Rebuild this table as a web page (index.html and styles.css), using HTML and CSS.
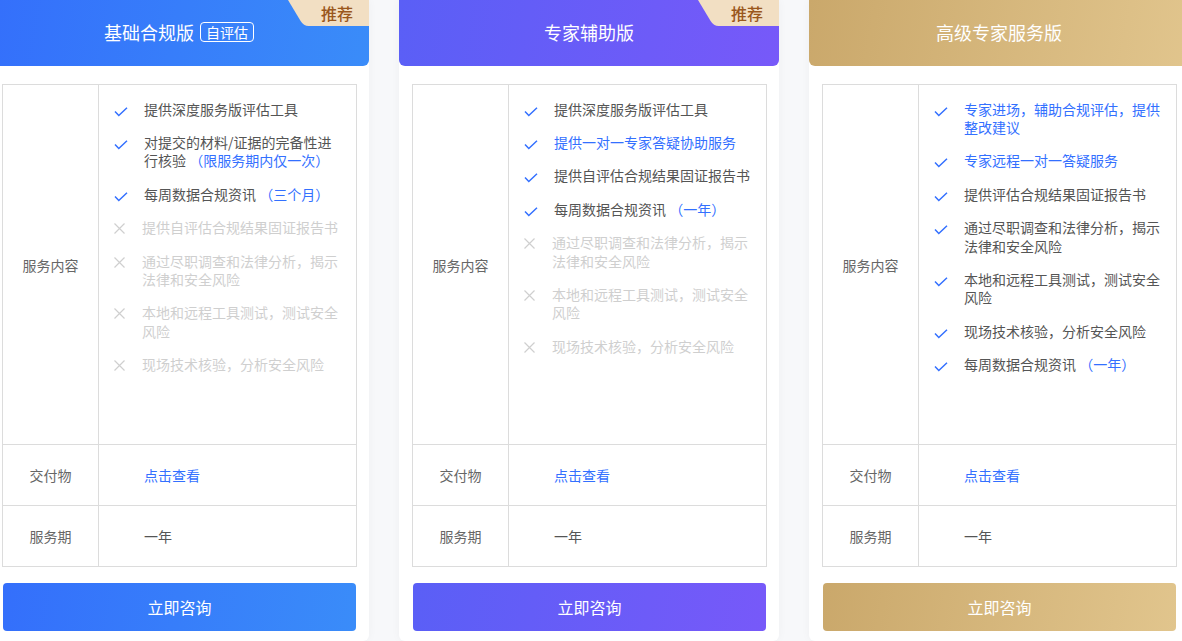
FILE: index.html
```html
<!DOCTYPE html>
<html lang="zh-CN">
<head>
<meta charset="utf-8">
<title>服务版本</title>
<link rel="stylesheet" href="styles.css">
</head>
<body>
<div class="cards">
  <div class="card card--blue">
    <div class="card__head">
      <span class="card__title">基础合规版</span><span class="card__badge">自评估</span>
      <div class="card__tag"><span>推荐</span></div>
    </div>
    <div class="card__body">
      <div class="spec">
        <div class="spec__row spec__row--main">
          <div class="spec__label">服务内容</div>
          <div class="spec__value">
            <ul class="features">
              <li class="feat"><span class="feat__icon"><svg width="14" height="10" viewBox="0 0 14 10"><path d="M1 4.5 L4.8 8.5 L13 0.8" fill="none" stroke="#3370ff" stroke-width="1.5"/></svg></span><span class="feat__text">提供深度服务版评估工具</span></li>
              <li class="feat"><span class="feat__icon"><svg width="14" height="10" viewBox="0 0 14 10"><path d="M1 4.5 L4.8 8.5 L13 0.8" fill="none" stroke="#3370ff" stroke-width="1.5"/></svg></span><span class="feat__text">对提交的材料/证据的完备性进行核验 <em class="hl">（限服务期内仅一次）</em></span></li>
              <li class="feat"><span class="feat__icon"><svg width="14" height="10" viewBox="0 0 14 10"><path d="M1 4.5 L4.8 8.5 L13 0.8" fill="none" stroke="#3370ff" stroke-width="1.5"/></svg></span><span class="feat__text">每周数据合规资讯 <em class="hl">（三个月）</em></span></li>
              <li class="feat feat--off"><span class="feat__icon"><svg width="11" height="11" viewBox="0 0 11 11"><path d="M0.5 0.5 L10.5 10.5 M10.5 0.5 L0.5 10.5" fill="none" stroke="#cfcfcf" stroke-width="1.2"/></svg></span><span class="feat__text">提供自评估合规结果固证报告书</span></li>
              <li class="feat feat--off"><span class="feat__icon"><svg width="11" height="11" viewBox="0 0 11 11"><path d="M0.5 0.5 L10.5 10.5 M10.5 0.5 L0.5 10.5" fill="none" stroke="#cfcfcf" stroke-width="1.2"/></svg></span><span class="feat__text">通过尽职调查和法律分析，揭示法律和安全风险</span></li>
              <li class="feat feat--off"><span class="feat__icon"><svg width="11" height="11" viewBox="0 0 11 11"><path d="M0.5 0.5 L10.5 10.5 M10.5 0.5 L0.5 10.5" fill="none" stroke="#cfcfcf" stroke-width="1.2"/></svg></span><span class="feat__text">本地和远程工具测试，测试安全风险</span></li>
              <li class="feat feat--off"><span class="feat__icon"><svg width="11" height="11" viewBox="0 0 11 11"><path d="M0.5 0.5 L10.5 10.5 M10.5 0.5 L0.5 10.5" fill="none" stroke="#cfcfcf" stroke-width="1.2"/></svg></span><span class="feat__text">现场技术核验，分析安全风险</span></li>
            </ul>
          </div>
        </div>
        <div class="spec__row">
          <div class="spec__label">交付物</div>
          <div class="spec__value spec__value--plain"><a class="link">点击查看</a></div>
        </div>
        <div class="spec__row">
          <div class="spec__label">服务期</div>
          <div class="spec__value spec__value--plain">一年</div>
        </div>
      </div>
      <button class="card__btn">立即咨询</button>
    </div>
  </div>

  <div class="card card--purple">
    <div class="card__head">
      <span class="card__title">专家辅助版</span>
      <div class="card__tag"><span>推荐</span></div>
    </div>
    <div class="card__body">
      <div class="spec">
        <div class="spec__row spec__row--main">
          <div class="spec__label">服务内容</div>
          <div class="spec__value">
            <ul class="features">
              <li class="feat"><span class="feat__icon"><svg width="14" height="10" viewBox="0 0 14 10"><path d="M1 4.5 L4.8 8.5 L13 0.8" fill="none" stroke="#3370ff" stroke-width="1.5"/></svg></span><span class="feat__text">提供深度服务版评估工具</span></li>
              <li class="feat"><span class="feat__icon"><svg width="14" height="10" viewBox="0 0 14 10"><path d="M1 4.5 L4.8 8.5 L13 0.8" fill="none" stroke="#3370ff" stroke-width="1.5"/></svg></span><span class="feat__text hl">提供一对一专家答疑协助服务</span></li>
              <li class="feat"><span class="feat__icon"><svg width="14" height="10" viewBox="0 0 14 10"><path d="M1 4.5 L4.8 8.5 L13 0.8" fill="none" stroke="#3370ff" stroke-width="1.5"/></svg></span><span class="feat__text">提供自评估合规结果固证报告书</span></li>
              <li class="feat"><span class="feat__icon"><svg width="14" height="10" viewBox="0 0 14 10"><path d="M1 4.5 L4.8 8.5 L13 0.8" fill="none" stroke="#3370ff" stroke-width="1.5"/></svg></span><span class="feat__text">每周数据合规资讯 <em class="hl">（一年）</em></span></li>
              <li class="feat feat--off"><span class="feat__icon"><svg width="11" height="11" viewBox="0 0 11 11"><path d="M0.5 0.5 L10.5 10.5 M10.5 0.5 L0.5 10.5" fill="none" stroke="#cfcfcf" stroke-width="1.2"/></svg></span><span class="feat__text">通过尽职调查和法律分析，揭示法律和安全风险</span></li>
              <li class="feat feat--off"><span class="feat__icon"><svg width="11" height="11" viewBox="0 0 11 11"><path d="M0.5 0.5 L10.5 10.5 M10.5 0.5 L0.5 10.5" fill="none" stroke="#cfcfcf" stroke-width="1.2"/></svg></span><span class="feat__text">本地和远程工具测试，测试安全风险</span></li>
              <li class="feat feat--off"><span class="feat__icon"><svg width="11" height="11" viewBox="0 0 11 11"><path d="M0.5 0.5 L10.5 10.5 M10.5 0.5 L0.5 10.5" fill="none" stroke="#cfcfcf" stroke-width="1.2"/></svg></span><span class="feat__text">现场技术核验，分析安全风险</span></li>
            </ul>
          </div>
        </div>
        <div class="spec__row">
          <div class="spec__label">交付物</div>
          <div class="spec__value spec__value--plain"><a class="link">点击查看</a></div>
        </div>
        <div class="spec__row">
          <div class="spec__label">服务期</div>
          <div class="spec__value spec__value--plain">一年</div>
        </div>
      </div>
      <button class="card__btn">立即咨询</button>
    </div>
  </div>

  <div class="card card--gold">
    <div class="card__head">
      <span class="card__title">高级专家服务版</span>
    </div>
    <div class="card__body">
      <div class="spec">
        <div class="spec__row spec__row--main">
          <div class="spec__label">服务内容</div>
          <div class="spec__value">
            <ul class="features">
              <li class="feat"><span class="feat__icon"><svg width="14" height="10" viewBox="0 0 14 10"><path d="M1 4.5 L4.8 8.5 L13 0.8" fill="none" stroke="#3370ff" stroke-width="1.5"/></svg></span><span class="feat__text hl">专家进场，辅助合规评估，提供整改建议</span></li>
              <li class="feat"><span class="feat__icon"><svg width="14" height="10" viewBox="0 0 14 10"><path d="M1 4.5 L4.8 8.5 L13 0.8" fill="none" stroke="#3370ff" stroke-width="1.5"/></svg></span><span class="feat__text hl">专家远程一对一答疑服务</span></li>
              <li class="feat"><span class="feat__icon"><svg width="14" height="10" viewBox="0 0 14 10"><path d="M1 4.5 L4.8 8.5 L13 0.8" fill="none" stroke="#3370ff" stroke-width="1.5"/></svg></span><span class="feat__text">提供评估合规结果固证报告书</span></li>
              <li class="feat"><span class="feat__icon"><svg width="14" height="10" viewBox="0 0 14 10"><path d="M1 4.5 L4.8 8.5 L13 0.8" fill="none" stroke="#3370ff" stroke-width="1.5"/></svg></span><span class="feat__text">通过尽职调查和法律分析，揭示法律和安全风险</span></li>
              <li class="feat"><span class="feat__icon"><svg width="14" height="10" viewBox="0 0 14 10"><path d="M1 4.5 L4.8 8.5 L13 0.8" fill="none" stroke="#3370ff" stroke-width="1.5"/></svg></span><span class="feat__text">本地和远程工具测试，测试安全风险</span></li>
              <li class="feat"><span class="feat__icon"><svg width="14" height="10" viewBox="0 0 14 10"><path d="M1 4.5 L4.8 8.5 L13 0.8" fill="none" stroke="#3370ff" stroke-width="1.5"/></svg></span><span class="feat__text">现场技术核验，分析安全风险</span></li>
              <li class="feat"><span class="feat__icon"><svg width="14" height="10" viewBox="0 0 14 10"><path d="M1 4.5 L4.8 8.5 L13 0.8" fill="none" stroke="#3370ff" stroke-width="1.5"/></svg></span><span class="feat__text">每周数据合规资讯 <em class="hl">（一年）</em></span></li>
            </ul>
          </div>
        </div>
        <div class="spec__row">
          <div class="spec__label">交付物</div>
          <div class="spec__value spec__value--plain"><a class="link">点击查看</a></div>
        </div>
        <div class="spec__row">
          <div class="spec__label">服务期</div>
          <div class="spec__value spec__value--plain">一年</div>
        </div>
      </div>
      <button class="card__btn">立即咨询</button>
    </div>
  </div>
</div>
</body>
</html>
```

FILE: styles.css
```css
html, body {
  margin: 0;
  padding: 0;
  height: 100%;
  overflow: hidden;
}
body {
  background: #f7f8fa;
  font-family: "Noto Sans CJK SC", "Noto Sans", sans-serif;
  color: #555;
}
.cards {
  display: flex;
  gap: 30px;
  margin-left: -11px;
}
.card {
  flex: 0 0 380px;
  width: 380px;
  background: #fff;
  border-radius: 0 0 6px 6px;
  box-shadow: 0 0 10px rgba(0, 0, 0, 0.04);
}
.card__head {
  position: relative;
  height: 66px;
  padding-bottom: 2px;
  box-sizing: border-box;
  display: flex;
  align-items: center;
  justify-content: center;
  border-radius: 0 0 6px 6px;
  overflow: hidden;
  color: #fff;
}
.card--blue .card__head,
.card--blue .card__btn {
  background: linear-gradient(100deg, #346ffb 0%, #3a8cf9 100%);
}
.card--purple .card__head,
.card--purple .card__btn {
  background: linear-gradient(100deg, #5a5ff6 0%, #7759f9 100%);
}
.card--gold .card__head,
.card--gold .card__btn {
  background: linear-gradient(100deg, #caa86b 0%, #e1c58d 100%);
}
.card__title {
  font-size: 18px;
  line-height: 24px;
}
.card__badge {
  margin-left: 6px;
  border: 1px solid #fff;
  border-radius: 4px;
  padding: 0 5px;
  font-size: 14px;
  line-height: 18px;
}
.card__tag {
  position: absolute;
  top: 0;
  right: 0;
  width: 81px;
  height: 26px;
}
.card__tag::before {
  content: "";
  position: absolute;
  left: 0;
  top: 0;
  width: 110px;
  height: 26px;
  background: #f2dfc3;
  border-bottom-left-radius: 5px;
  transform-origin: top left;
  transform: skewX(31deg);
}
.card__tag span {
  position: relative;
  display: block;
  padding-left: 33px;
  font-size: 16px;
  line-height: 26px;
  font-weight: 500;
  color: #9a571c;
}
.card__body {
  padding: 18px 12px 10px 13px;
}
.spec {
  border: 1px solid #dcdcdc;
}
.spec__row {
  display: flex;
  height: 60px;
  border-top: 1px solid #dcdcdc;
}
.spec__row--main {
  height: 359px;
  border-top: none;
}
.spec__label {
  flex: 0 0 95px;
  border-right: 1px solid #dcdcdc;
  display: flex;
  align-items: center;
  justify-content: center;
  font-size: 14px;
  color: #666;
}
.spec__value {
  flex: 1;
  min-width: 0;
}
.spec__value--plain {
  display: flex;
  align-items: center;
  padding-left: 45px;
  font-size: 14px;
  color: #555;
}
.link {
  color: #3370ff;
  text-decoration: none;
}
.features {
  list-style: none;
  margin: 0;
  padding: 14.5px 0 0 15px;
}
.feat {
  display: flex;
  align-items: flex-start;
  font-size: 14px;
  line-height: 18.4px;
  margin-bottom: 15px;
}
.feat__icon {
  flex: 0 0 30px;
}
.feat__icon svg {
  display: block;
  margin-top: 7px;
}
.feat--off .feat__icon {
  flex-basis: 28px;
}
.feat--off .feat__icon svg {
  margin-top: 5px;
}
.feat__text {
  width: 198px;
}
.feat--off .feat__text {
  color: #cfcfcf;
}
.hl {
  color: #3370ff;
  font-style: normal;
}
.card__btn {
  display: block;
  width: 353px;
  height: 48px;
  margin: 16px 0 0 1px;
  border: none;
  border-radius: 4px;
  color: #fff;
  font-family: inherit;
  font-size: 16px;
  cursor: pointer;
}
```
